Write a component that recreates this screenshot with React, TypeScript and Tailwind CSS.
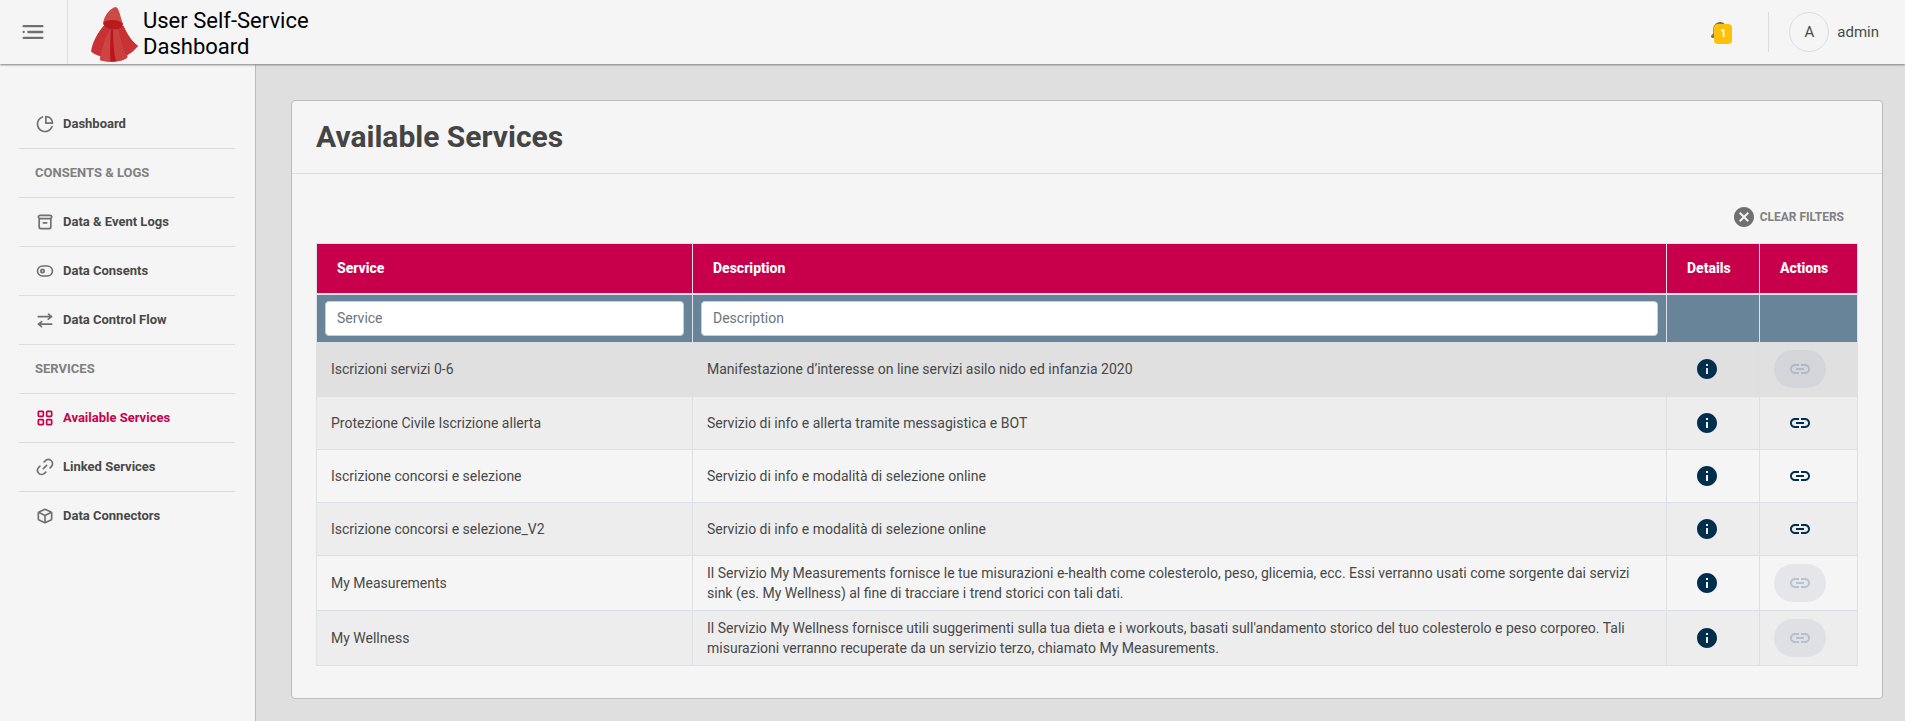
import React, { useState } from 'react';
import { MdCancel, MdInfo, MdLink } from 'react-icons/md';

type IconProps = { className?: string; children: React.ReactNode };

function Glyph({ className = 'h-5 w-5', children }: IconProps) {
  return (
    <svg viewBox="0 0 24 24" fill="currentColor" className={className} aria-hidden="true">
      {children}
    </svg>
  );
}

const MenuIcon = () => (
  <Glyph className="h-7 w-7">
    <circle cx="4" cy="12" r="1" />
    <rect x="7" y="11" width="14" height="2" rx=".94" />
    <rect x="3" y="16" width="18" height="2" rx=".94" />
    <rect x="3" y="6" width="18" height="2" rx=".94" />
  </Glyph>
);

const BellIcon = () => (
  <Glyph className="h-6 w-6">
    <path d="M20.52 15.21l-1.8-1.81V8.94a6.86 6.86 0 0 0-5.82-6.88 6.74 6.74 0 0 0-7.62 6.67v4.67l-1.8 1.81A1.64 1.64 0 0 0 4.64 18H8v.34A3.84 3.84 0 0 0 12 22a3.84 3.84 0 0 0 4-3.66V18h3.36a1.64 1.64 0 0 0 1.16-2.79zM14 18.34A1.88 1.88 0 0 1 12 20a1.88 1.88 0 0 1-2-1.66V18h4zM5.51 16l1.18-1.18a2 2 0 0 0 .59-1.42V8.73A4.73 4.73 0 0 1 8.9 5.17 4.67 4.67 0 0 1 12.64 4a4.86 4.86 0 0 1 4.08 4.9v4.5a2 2 0 0 0 .58 1.42L18.49 16z" />
  </Glyph>
);

const PieIcon = () => (
  <Glyph>
    <path d="M13 2a1 1 0 0 0-1 1v8a1 1 0 0 0 1 1h8a1 1 0 0 0 1-1 9 9 0 0 0-9-9zm1 8V4.07A7 7 0 0 1 19.93 10z" />
    <path d="M20.82 14.06a1 1 0 0 0-1.28.61A8 8 0 1 1 9.33 4.46a1 1 0 0 0-.66-1.89 10 10 0 1 0 12.76 12.76 1 1 0 0 0-.61-1.27z" />
  </Glyph>
);

const ArchiveIcon = () => (
  <Glyph>
    <path d="M21 6a3 3 0 0 0-3-3H6a3 3 0 0 0-2 5.22V18a3 3 0 0 0 3 3h10a3 3 0 0 0 3-3V8.22A3 3 0 0 0 21 6zM6 5h12a1 1 0 0 1 0 2H6a1 1 0 0 1 0-2zm12 13a1 1 0 0 1-1 1H7a1 1 0 0 1-1-1V9h12z" />
    <rect x="9" y="12" width="6" height="2" rx=".87" />
  </Glyph>
);

const ToggleIcon = () => (
  <Glyph>
    <path d="M15 5H9a7 7 0 0 0 0 14h6a7 7 0 0 0 0-14zm0 12H9A5 5 0 0 1 9 7h6a5 5 0 0 1 0 10z" />
    <path d="M9 9a3 3 0 1 0 3 3 3 3 0 0 0-3-3zm0 4a1 1 0 1 1 1-1 1 1 0 0 1-1 1z" />
  </Glyph>
);

const SwapIcon = () => (
  <Glyph>
    <path d="M4 9h13l-1.6 1.2a1 1 0 0 0-.2 1.4 1 1 0 0 0 .8.4 1 1 0 0 0 .6-.2l4-3a1 1 0 0 0 0-1.59l-3.86-3a1 1 0 0 0-1.23 1.58L17.08 7H4a1 1 0 0 0 0 2z" />
    <path d="M20 16H7l1.6-1.2a1 1 0 0 0-1.2-1.6l-4 3a1 1 0 0 0 0 1.59l3.86 3a1 1 0 0 0 .61.21 1 1 0 0 0 .79-.39 1 1 0 0 0-.17-1.4L6.92 18H20a1 1 0 0 0 0-2z" />
  </Glyph>
);

const GridIcon = () => (
  <Glyph>
    <path d="M9 3H5a2 2 0 0 0-2 2v4a2 2 0 0 0 2 2h4a2 2 0 0 0 2-2V5a2 2 0 0 0-2-2zM5 9V5h4v4z" />
    <path d="M19 3h-4a2 2 0 0 0-2 2v4a2 2 0 0 0 2 2h4a2 2 0 0 0 2-2V5a2 2 0 0 0-2-2zm-4 6V5h4v4z" />
    <path d="M9 13H5a2 2 0 0 0-2 2v4a2 2 0 0 0 2 2h4a2 2 0 0 0 2-2v-4a2 2 0 0 0-2-2zm-4 6v-4h4v4z" />
    <path d="M19 13h-4a2 2 0 0 0-2 2v4a2 2 0 0 0 2 2h4a2 2 0 0 0 2-2v-4a2 2 0 0 0-2-2zm-4 6v-4h4v4z" />
  </Glyph>
);

const ChainIcon = () => (
  <Glyph>
    <path d="M13.29 9.29l-4 4a1 1 0 0 0 0 1.42 1 1 0 0 0 1.42 0l4-4a1 1 0 0 0-1.42-1.42z" />
    <path d="M12.28 17.4L11 18.67a4.2 4.2 0 0 1-5.58.4 4 4 0 0 1-.27-5.93l1.42-1.43a1 1 0 0 0 0-1.42 1 1 0 0 0-1.42 0l-1.27 1.28a6.15 6.15 0 0 0-.67 8.07 6.06 6.06 0 0 0 9.07.6l1.42-1.42a1 1 0 0 0-1.42-1.42z" />
    <path d="M19.66 3.22a6.18 6.18 0 0 0-8.13.68L10.45 5a1.09 1.09 0 0 0-.17 1.61 1 1 0 0 0 1.42 0L13 5.3a4.17 4.17 0 0 1 5.57-.4 4 4 0 0 1 .27 5.95l-1.42 1.43a1 1 0 0 0 0 1.42 1 1 0 0 0 1.42 0l1.42-1.42a6.06 6.06 0 0 0-.6-9.06z" />
  </Glyph>
);

const CubeIcon = () => (
  <Glyph>
    <path d="M20.66 7.26c0-.07-.1-.14-.15-.21l-.09-.1a2.5 2.5 0 0 0-.86-.68l-6.4-3a2.7 2.7 0 0 0-2.26 0l-6.4 3a2.6 2.6 0 0 0-.86.68L3.52 7a1 1 0 0 0-.15.2A2.39 2.39 0 0 0 3 8.46v7.06a2.49 2.49 0 0 0 1.46 2.26l6.4 3a2.7 2.7 0 0 0 2.27 0l6.4-3A2.49 2.49 0 0 0 21 15.54V8.46a2.39 2.39 0 0 0-.34-1.2zm-8.95-2.2a.73.73 0 0 1 .58 0l5.33 2.48L12 10.15 6.38 7.54zM5.3 16a.47.47 0 0 1-.3-.43V9.1l6 2.79v6.72zm13.39 0L13 18.61v-6.72l6-2.79v6.44a.48.48 0 0 1-.31.46z" />
  </Glyph>
);

function CapeLogo() {
  return (
    <svg viewBox="0 0 47 55" className="h-[55px] w-[47px]" aria-hidden="true">
      <path d="M12.500 19C7 25 1.500 35 0 44.500c3 2.500 6 4 9.500 4.800L9 53c4 1.500 10 2.200 15 1.700 5.500-.6 10-2 12.500-4.200l-.3-2.300 5-3.200-.5-1.700L47 39c-6-4-11-12-14.500-20z" fill="#c93235" />
      <path d="M20 21c-.8 11-1 22-.4 33.700-4-.1-7.500-.7-10.600-1.700C10.500 43 14 30 20 21z" fill="#cd4442" />
      <path d="M21.500 21h5.500c2 11 5 22 9 29.800-3 2-7 3.300-11.500 3.800z" fill="#cb403f" />
      <path d="M20 21h2c0 11 0 22 2.800 33-2 .6-3.500.8-5.200.7C19.200 43 19.400 31 20 21z" fill="#b5171b" />
      <path d="M29 20c3 10 8 19 12.500 25L47 39c-6-4-11-12-14.500-20z" fill="#c93235" />
      <path d="M12.300 15C14 7 20 1 24.500 0c3.500 0 4.500 9 7.500 17-1 4-5 5.500-10 5.500S12 20 12.300 15z" fill="#ca4a45" />
      <path d="M12.300 15.500c4-3.500 14-3.500 19.500 1 .8 3-3.800 6-9.300 6s-10.500-3-10.200-7z" fill="#b81a1e" />
    </svg>
  );
}

type NavEntry = { label: string; icon?: React.ReactNode; active?: boolean };

const NAV: NavEntry[] = [
  { label: 'Dashboard', icon: <PieIcon /> },
  { label: 'CONSENTS & LOGS' },
  { label: 'Data & Event Logs', icon: <ArchiveIcon /> },
  { label: 'Data Consents', icon: <ToggleIcon /> },
  { label: 'Data Control Flow', icon: <SwapIcon /> },
  { label: 'SERVICES' },
  { label: 'Available Services', icon: <GridIcon />, active: true },
  { label: 'Linked Services', icon: <ChainIcon /> },
  { label: 'Data Connectors', icon: <CubeIcon /> },
];

type Service = { name: string; description: string; linkable: boolean };

const SERVICES: Service[] = [
  { name: 'Iscrizioni servizi 0-6', description: 'Manifestazione d’interesse on line servizi asilo nido ed infanzia 2020', linkable: false },
  { name: 'Protezione Civile Iscrizione allerta', description: 'Servizio di info e allerta tramite messagistica e BOT', linkable: true },
  { name: 'Iscrizione concorsi e selezione', description: 'Servizio di info e modalità di selezione online', linkable: true },
  { name: 'Iscrizione concorsi e selezione_V2', description: 'Servizio di info e modalità di selezione online', linkable: true },
  {
    name: 'My Measurements',
    description:
      'Il Servizio My Measurements fornisce le tue misurazioni e-health come colesterolo, peso, glicemia, ecc. Essi verranno usati come sorgente dai servizi sink (es. My Wellness) al fine di tracciare i trend storici con tali dati.',
    linkable: false,
  },
  {
    name: 'My Wellness',
    description:
      "Il Servizio My Wellness fornisce utili suggerimenti sulla tua dieta e i workouts, basati sull'andamento storico del tuo colesterolo e peso corporeo. Tali misurazioni verranno recuperate da un servizio terzo, chiamato My Measurements.",
    linkable: false,
  },
];

function rowClass(index: number) {
  if (index === 0) return 'border-b border-[#e0e0e0] bg-[#e0e0e0]';
  return index % 2 ? 'border-b border-[#dddfe6] bg-[#ededed]' : 'border-b border-[#dddfe6] bg-[#f5f5f5]';
}

function Header() {
  return (
    <header className="relative z-10 flex h-16 items-center bg-[#f5f5f5] shadow-[0_1px_2px_#808080]">
      <button type="button" aria-label="Toggle menu" className="flex h-full w-[67px] items-center justify-center pr-0.5 text-[#707070]">
        <MenuIcon />
      </button>
      <a href="#" className="flex h-full items-center gap-[5px] border-l border-[#dddddd] pl-[23px] text-black">
        <span className="pt-1">
          <CapeLogo />
        </span>
        <span className="w-[200px] pt-[3px] text-[22px] leading-[26px]">User Self-Service Dashboard</span>
      </a>
      <div className="ml-auto flex items-center pr-[26px]">
        <button type="button" aria-label="Notifications" className="relative mr-9 text-[#707070]">
          <BellIcon />
          <span className="absolute top-1 left-1.5 flex h-5 w-[18px] items-center justify-center rounded bg-[#ffc107] text-[10px] leading-none font-bold text-white">
            1
          </span>
        </button>
        <div className="flex items-center gap-2 border-l border-[#dddddd] pl-5 text-[15px] text-[#4a4a4a]">
          <span className="flex h-10 w-10 items-center justify-center rounded-full border border-[#dddddd]">A</span>
          <span>admin</span>
        </div>
      </div>
    </header>
  );
}

function Sidebar() {
  return (
    <nav className="w-64 shrink-0 border-r border-[#bbbbbb] bg-[#f5f5f5] pt-9 pr-5 pl-[19px] text-[13px] font-bold">
      <ul className="divide-y divide-[#dddddd]">
        {NAV.map((entry) => (
          <li key={entry.label}>
            {entry.icon ? (
              <a
                href="#"
                className={
                  entry.active
                    ? 'flex h-12 items-center gap-2 pl-4 text-[#c8004b]'
                    : 'flex h-12 items-center gap-2 pl-4 text-[#484848]'
                }
              >
                <span className={entry.active ? 'text-[#c8004b]' : 'text-[#707070]'}>{entry.icon}</span>
                {entry.label}
              </a>
            ) : (
              <div className="flex h-12 items-center pl-4 text-[#808080]">{entry.label}</div>
            )}
          </li>
        ))}
      </ul>
    </nav>
  );
}

const FILTER_CLASS =
  'block h-[35px] w-full rounded border border-[#c5d0dd] bg-white px-[11px] text-sm text-[#495057] placeholder:text-[#6c757d]';

export default function App() {
  const [name, setName] = useState('');
  const [description, setDescription] = useState('');

  const rows = SERVICES.filter(
    (s) =>
      s.name.toLowerCase().includes(name.toLowerCase()) &&
      s.description.toLowerCase().includes(description.toLowerCase()),
  );

  return (
    <div className="flex min-h-screen flex-col bg-[#dfdfdf] font-['Roboto',sans-serif] text-[#484848]">
      <Header />
      <div className="flex grow">
        <Sidebar />
        <main className="min-w-0 grow pt-9 pr-[22px] pb-5 pl-[35px]">
          <section className="rounded border border-[#bbbbbb] bg-[#f5f5f5]">
            <h1 className="border-b border-[#dddddd] px-6 py-4 text-[30px] leading-10 font-bold text-[#444444]">
              Available Services
            </h1>
            <div className="px-6 pt-[27px] pb-8">
              <div className="flex justify-end pr-3.5 pb-2.5">
                <button
                  type="button"
                  onClick={() => {
                    setName('');
                    setDescription('');
                  }}
                  className="flex h-8 items-center gap-1 text-xs font-bold text-[#808080]"
                >
                  <MdCancel className="h-6 w-6 text-[#707070]" />
                  CLEAR FILTERS
                </button>
              </div>
              <table className="w-full table-fixed border-collapse text-sm leading-5">
                <colgroup>
                  <col className="w-[24.4%]" />
                  <col />
                  <col className="w-[93px]" />
                  <col className="w-[98px]" />
                </colgroup>
                <thead>
                  <tr className="h-[50px] bg-[#c8004b] text-left text-white">
                    <th className="border border-b-2 border-[#dee2e6] px-5 font-extrabold">Service</th>
                    <th className="border border-b-2 border-[#dee2e6] px-5 font-extrabold">Description</th>
                    <th className="border border-b-2 border-[#dee2e6] px-5 font-extrabold">Details</th>
                    <th className="border border-b-2 border-[#dee2e6] px-5 font-extrabold">Actions</th>
                  </tr>
                  <tr className="bg-[#688499]">
                    <td className="border-x border-[#dee2e6] px-2 py-1.5">
                      <input
                        aria-label="Service"
                        placeholder="Service"
                        value={name}
                        onChange={(e) => setName(e.target.value)}
                        className={FILTER_CLASS}
                      />
                    </td>
                    <td className="border-x border-[#dee2e6] px-2 py-1.5">
                      <input
                        aria-label="Description"
                        placeholder="Description"
                        value={description}
                        onChange={(e) => setDescription(e.target.value)}
                        className={FILTER_CLASS}
                      />
                    </td>
                    <td className="border-x border-[#dee2e6]" />
                    <td className="border-x border-[#dee2e6]" />
                  </tr>
                </thead>
                <tbody>
                  {rows.map((service, index) => (
                    <tr key={service.name} className={rowClass(index)}>
                      <td className="border-x border-[#dddfe6] px-3.5">{service.name}</td>
                      <td className="border-x border-[#dddfe6] px-3.5">{service.description}</td>
                      <td className="border-x border-[#dddfe6] px-3.5 py-2">
                        <button
                          type="button"
                          aria-label={`Details of ${service.name}`}
                          className="flex h-9 w-[52px] items-center justify-center text-[#002f4e]"
                        >
                          <MdInfo className="h-6 w-6" />
                        </button>
                      </td>
                      <td className="border-x border-[#dddfe6] px-3.5 py-2">
                        <button
                          type="button"
                          aria-label={`Link ${service.name}`}
                          disabled={!service.linkable}
                          className={
                            service.linkable
                              ? 'flex h-9 w-[52px] items-center justify-center text-[#002f4e]'
                              : 'flex h-[38px] w-[52px] items-center justify-center rounded-full bg-[#8f9bb3]/16 text-[#8f9bb3]/48'
                          }
                        >
                          <MdLink className="h-6 w-6" />
                        </button>
                      </td>
                    </tr>
                  ))}
                </tbody>
              </table>
            </div>
          </section>
        </main>
      </div>
    </div>
  );
}
